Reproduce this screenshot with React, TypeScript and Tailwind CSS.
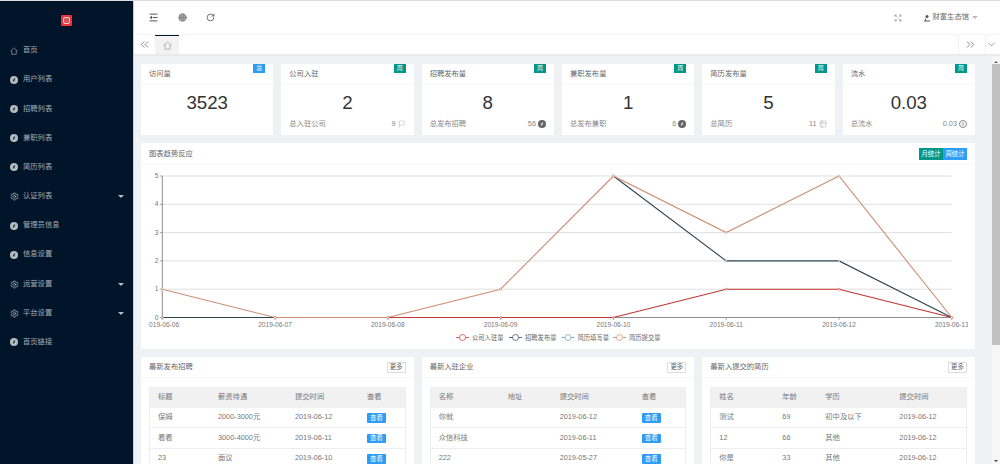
import React from "react";
import { Globe, RotateCw, ChevronsLeft, ChevronsRight, ChevronDown, Settings, Expand, Flag, Table2 } from "lucide-react";

const FONT = "font-['Liberation_Sans','Noto_Sans_CJK_SC',sans-serif]";

function HouseIcon({ className }: { className: string }) {
  return (
    <svg viewBox="0 0 16 16" className={className} fill="none" stroke="currentColor" strokeWidth="1.3">
      <path d="M1 8.5 L8 1.5 L15 8.5" />
      <path d="M3.5 6.5 V14.5 H12.5 V6.5" />
    </svg>
  );
}

function DotIcon() {
  return (
    <svg viewBox="0 0 16 16" className="w-[8px] h-[8px] shrink-0">
      <circle cx="8" cy="8" r="8" fill="#b4b9be" />
      <path d="M10.5 4 L7 7 L5.5 12 L9 9 Z" fill="#001529" />
    </svg>
  );
}

type MenuItem = { label: string; icon: "home" | "dot" | "gear"; arrow?: boolean };
const menu: MenuItem[] = [
  { label: "首页", icon: "home" },
  { label: "用户列表", icon: "dot" },
  { label: "招聘列表", icon: "dot" },
  { label: "兼职列表", icon: "dot" },
  { label: "简历列表", icon: "dot" },
  { label: "认证列表", icon: "gear", arrow: true },
  { label: "管理员信息", icon: "dot" },
  { label: "信息设置", icon: "dot" },
  { label: "运营设置", icon: "gear", arrow: true },
  { label: "平台设置", icon: "gear", arrow: true },
  { label: "首页链接", icon: "dot" },
];

function Sidebar() {
  return (
    <aside className="w-[133px] shrink-0 bg-[#001529] text-[#a6adb4] flex flex-col">
      <div className="h-[35px] flex items-center justify-center pt-[4px]">
        <div className="w-[11px] h-[11px] bg-[#ee3338] rounded-[1px] flex items-center justify-center">
          <div className="w-[7px] h-[7px] rounded-[2px] border-[1.5px] border-[#f6cfcf] bg-[#d9555c]" />
        </div>
      </div>
      <nav className="flex flex-col">
        {menu.map((m) => (
          <div key={m.label} className="h-[29.2px] flex items-center pl-[10px] pr-[8px] text-[7.3px] relative">
            <span className="w-[8px] flex justify-center mr-[5px]">
              {m.icon === "home" && <HouseIcon className="w-[8px] h-[8px] shrink-0" />}
              {m.icon === "dot" && <DotIcon />}
              {m.icon === "gear" && <Settings size={9} strokeWidth={2.2} className="shrink-0" />}
            </span>
            <span>{m.label}</span>
            {m.arrow && (
              <span className="ml-auto mr-[1px] w-0 h-0 border-l-[3px] border-r-[3px] border-t-[3px] border-l-transparent border-r-transparent border-t-[#b5bbc0]" />
            )}
          </div>
        ))}
      </nav>
    </aside>
  );
}

function TopBar() {
  return (
    <header className="h-[34px] shrink-0 bg-white border-b border-[#f4f5f6] flex items-center pl-[15px] pr-[22px] text-[#444]">
      <svg viewBox="0 0 16 16" className="w-[9px] h-[9px]" fill="none" stroke="#444" strokeWidth="1.6">
        <path d="M1 2 H15 M7 8 H15 M1 14 H15" />
        <path d="M5 5.5 L1.5 8 L5 10.5 Z" fill="#444" strokeWidth="0.6" />
      </svg>
      <Globe size={9} strokeWidth={1.6} fill="#a8a8a8" className="ml-[20px] text-[#777]" />
      <RotateCw size={9} strokeWidth={2.2} className="ml-[19px] text-[#555]" />
      <Expand size={8} strokeWidth={1.8} className="ml-auto text-[#888]" />
      <div className="ml-[21px] flex items-center text-[7.3px] text-[#666]">
        <svg viewBox="0 0 16 16" className="w-[8px] h-[8px] mr-[2px]">
          <circle cx="8" cy="5" r="3" fill="#555" />
          <path d="M2 15 L14 15 L14 13 L5 13 L7 9 L5 9 Z" fill="#555" />
        </svg>
        <span>财富生态馆</span>
        <span className="ml-[3px] w-0 h-0 border-l-[3px] border-r-[3px] border-t-[3px] border-l-transparent border-r-transparent border-t-[#bbb]" />
      </div>
    </header>
  );
}

function TabBar() {
  return (
    <div className="h-[21px] shrink-0 bg-white border-b-2 border-[#e9eaec] flex items-stretch text-[#666]">
      <div className="w-[21px] flex items-center justify-center">
        <ChevronsLeft size={13} strokeWidth={1.4} />
      </div>
      <div className="w-[24px] bg-[#f3f3f3] border-t border-[#001529] flex items-center justify-center text-[#999]">
        <HouseIcon className="w-[9px] h-[9px]" />
      </div>
      <div className="ml-auto w-[27px] border-l border-[#f0f0f0] flex items-center justify-center pr-[3px]">
        <ChevronsRight size={13} strokeWidth={1.4} />
      </div>
      <div className="w-[15px] border-l border-[#f0f0f0] flex items-center justify-start">
        <ChevronDown size={11} strokeWidth={1.4} />
      </div>
    </div>
  );
}

type Stat = { title: string; tag: string; tagColor: string; value: string; foot?: string; footVal?: string; icon?: React.ReactNode };

const coin = (
  <svg viewBox="0 0 16 16" className="w-[8px] h-[8px]">
    <circle cx="8" cy="8" r="8" fill="#666" />
    <path d="M10.5 4 L7 7 L5.5 12 L9 9 Z" fill="#fff" />
  </svg>
);

const stats: Stat[] = [
  { title: "访问量", tag: "总", tagColor: "bg-[#2d9cf7]", value: "3523" },
  { title: "公司入驻", tag: "周", tagColor: "bg-[#009688]", value: "2", foot: "总入驻公司", footVal: "9", icon: <Flag size={8} strokeWidth={1} /> },
  { title: "招聘发布量", tag: "周", tagColor: "bg-[#009688]", value: "8", foot: "总发布招聘", footVal: "56", icon: coin },
  { title: "兼职发布量", tag: "周", tagColor: "bg-[#009688]", value: "1", foot: "总发布兼职", footVal: "6", icon: coin },
  { title: "简历发布量", tag: "周", tagColor: "bg-[#009688]", value: "5", foot: "总简历", footVal: "11", icon: <Table2 size={8} strokeWidth={1} /> },
  {
    title: "流水",
    tag: "周",
    tagColor: "bg-[#009688]",
    value: "0.03",
    foot: "总流水",
    footVal: "0.03",
    icon: <span className="w-[8px] h-[8px] rounded-full border border-[#888] text-[5px] leading-none flex items-center justify-center">¥</span>,
  },
];

function StatCard({ s }: { s: Stat }) {
  return (
    <div className="bg-white h-[71px] relative text-[#666]">
      <div className="h-[21px] pt-[1px] border-b border-[#f6f6f6] px-[8px] flex items-center text-[7.3px]">{s.title}</div>
      <span className={`absolute right-[8px] top-0 h-[9px] w-[12px] ${s.tagColor} text-white text-[6px] flex items-center justify-center`}>{s.tag}</span>
      <div className="text-center text-[#333] text-[18.7px] leading-[22px] pt-[7px] h-[34px]">{s.value}</div>
      {s.foot && (
        <div className="flex items-center justify-between px-[8px] text-[7.3px] text-[#888]">
          <span>{s.foot}</span>
          <span className="flex items-center gap-[2px]">
            {s.footVal}
            {s.icon}
          </span>
        </div>
      )}
    </div>
  );
}

const X = [162.3, 275, 387.8, 500.6, 613.4, 726.2, 839, 951.8].map((v) => v - 141);
const Y = (n: number) => 176 + (5 - n) * 28.3 - 165;
const pts = (d: number[], from = 0) => d.map((v, i) => `${X[i + from]},${Y(v)}`).join(" ");
const dates = ["2019-06-06", "2019-06-07", "2019-06-08", "2019-06-09", "2019-06-10", "2019-06-11", "2019-06-12", "2019-06-13"];
const series = [
  { c: "#c23531", d: [0, 0, 0, 0, 0, 1, 1, 0] },
  { c: "#2f4554", d: [0, 0, 0, 1, 5, 2, 2, 0] },
  { c: "#d48265", d: [1, 0, 0, 1, 5, 3, 5, 0] },
];

function Chart() {
  return (
    <svg viewBox="0 0 834 184" className="w-[834px] h-[184px] block">
      <style>{`text{font-family:'Liberation Sans','Noto Sans CJK SC',sans-serif}`}</style>
      {[1, 2, 3, 4, 5].map((n) => (
        <line key={n} x1={X[0]} x2={X[7]} y1={Y(n)} y2={Y(n)} stroke="#e0e0e0" strokeWidth="1" />
      ))}
      <line x1={X[0]} x2={X[0]} y1={Y(5)} y2={Y(0)} stroke="#8d8d8d" strokeWidth="1" />
      <line x1={X[0]} x2={X[7]} y1={Y(0)} y2={Y(0)} stroke="#8d8d8d" strokeWidth="1" />
      {[0, 1, 2, 3, 4, 5].map((n) => (
        <g key={n}>
          <line x1={X[0] - 2.5} x2={X[0]} y1={Y(n)} y2={Y(n)} stroke="#8d8d8d" strokeWidth="0.8" />
          <text x={X[0] - 4} y={Y(n) + 2} textAnchor="end" fontSize="6.6" fill="#777">{n}</text>
        </g>
      ))}
      {dates.map((d, i) => (
        <g key={d}>
          <line x1={X[i]} x2={X[i]} y1={Y(0)} y2={Y(0) + 2.5} stroke="#8d8d8d" strokeWidth="0.8" />
          <text x={X[i]} y={Y(0) + 9} textAnchor="middle" fontSize="6.6" fill="#777">{d}</text>
        </g>
      ))}
      <rect x="0" y={Y(0) + 3} width="8" height="9" fill="#fff" />
      <rect x="827" y={Y(0) + 3} width="7" height="9" fill="#fff" />
      <polyline points={pts(series[0].d)} fill="none" stroke={series[0].c} strokeWidth="1.1" />
      <polyline points={pts(series[1].d.slice(0, 2))} fill="none" stroke={series[1].c} strokeWidth="1.1" />
      <polyline points={pts(series[1].d.slice(4), 4)} fill="none" stroke={series[1].c} strokeWidth="1.1" />
      <polyline points={pts(series[2].d)} fill="none" stroke="#cf8d75" strokeWidth="1.1" />
      <line x1={X[2]} x2={X[4]} y1={Y(0)} y2={Y(0)} stroke={series[0].c} strokeWidth="1.1" />
      {series.flatMap((s) =>
        s.d.map((v, i) => <circle key={s.c + i} cx={X[i]} cy={Y(v)} r="1" fill="#fff" stroke={s.c === "#2f4554" ? "#8a7a78" : s.c} strokeWidth="0.5" />)
      )}
      {[
        { c: "#c23531", t: "公司入驻量", x: 315 },
        { c: "#2f4554", t: "招聘发布量", x: 368 },
        { c: "#61a0a8", t: "简历填写量", x: 420.5 },
        { c: "#d48265", t: "简历提交量", x: 472 },
      ].map((l) => (
        <g key={l.t}>
          <line x1={l.x} x2={l.x + 13} y1="172.5" y2="172.5" stroke={l.c} strokeWidth="0.8" />
          <circle cx={l.x + 6.5} cy="172.5" r="3" fill="#fff" stroke={l.c} strokeWidth="0.7" />
          <text x={l.x + 16} y="175" fontSize="6.3" fill="#666">{l.t}</text>
        </g>
      ))}
    </svg>
  );
}

type Tbl = { title: string; cols: string; head: string[]; rows: string[][]; viewCol?: boolean };
const tables: Tbl[] = [
  {
    title: "最新发布招聘",
    cols: "grid-cols-[60px_77px_72px_1fr]",
    head: ["标题", "薪资待遇", "提交时间", "查看"],
    rows: [["保姆", "2000-3000元", "2019-06-12"], ["看看", "3000-4000元", "2019-06-11"], ["23", "面议", "2019-06-10"]],
    viewCol: true,
  },
  {
    title: "最新入驻企业",
    cols: "grid-cols-[69px_52px_82px_1fr]",
    head: ["名称", "地址", "提交时间", "查看"],
    rows: [["你就", "", "2019-06-12"], ["众信科技", "", "2019-06-11"], ["222", "", "2019-05-27"]],
    viewCol: true,
  },
  {
    title: "最新入提交的简历",
    cols: "grid-cols-[63px_43px_74px_1fr]",
    head: ["姓名", "年龄", "学历", "提交时间"],
    rows: [["测试", "69", "初中及以下", "2019-06-12"], ["12", "66", "其他", "2019-06-12"], ["你是", "33", "其他", "2019-06-12"]],
  },
];

function TableCard({ t }: { t: Tbl }) {
  return (
    <div className="bg-white text-[#666] h-[120px]">
      <div className="h-[21px] border-b border-[#f6f6f6] px-[8px] flex items-center justify-between text-[7.3px]">
        <span className="pt-[1px]">{t.title}</span>
        <span className="w-[19px] h-[11px] border border-[#ddd] flex items-center justify-center text-[6.4px]">更多</span>
      </div>
      <div className="mt-[9px] mx-[8px] border-x border-[#eeeeee] text-[7.3px]">
        <div className={`grid ${t.cols} pl-[8px] h-[20.5px] items-center bg-[#f1f1f1] text-[#777]`}>
          {t.head.map((h) => (
            <span key={h}>{h}</span>
          ))}
        </div>
        {t.rows.map((r) => (
          <div key={r.join()} className={`grid ${t.cols} pl-[8px] pt-[1px] h-[20.5px] items-center border-b border-[#eeeeee] text-[#777]`}>
            {r.map((c, i) => (
              <span key={i}>{c}</span>
            ))}
            {t.viewCol && (
              <span className="w-[19px] h-[9.5px] bg-[#2d9cf7] text-white text-[6.4px] rounded-[1px] flex items-center justify-center">查看</span>
            )}
          </div>
        ))}
      </div>
    </div>
  );
}

function Scrollbar() {
  return (
    <div className="w-[8px] shrink-0 bg-[#f6f6f6] flex flex-col items-center">
      <span className="mt-[5px] w-0 h-0 border-l-[2px] border-r-[2px] border-b-[2px] border-l-transparent border-r-transparent border-b-[#666]" />
      <div className="mt-[1px] w-full h-[281px] bg-[#c1c1c1]" />
      <span className="mt-auto mb-[2px] w-0 h-0 border-l-[2px] border-r-[2px] border-t-[2px] border-l-transparent border-r-transparent border-t-[#444]" />
    </div>
  );
}

export default function App() {
  return (
    <div className={`${FONT} w-[1000px] h-[464px] overflow-hidden flex flex-col bg-white`}>
      <div className="h-px shrink-0 bg-[#dcdcdc]" />
      <div className="flex flex-1 min-h-0">
        <Sidebar />
        <div className="w-px shrink-0 bg-[#c9ccd0]" />
        <main className="flex-1 min-w-0 flex flex-col">
          <TopBar />
          <TabBar />
          <div className="flex flex-1 min-h-0">
            <div className="flex-1 min-w-0 bg-[#eff1f5] overflow-hidden pl-[7px] pr-[17px] pt-[8px] flex flex-col gap-[8px]">
              <div className="grid grid-cols-6 gap-[8px]">
                {stats.map((s) => (
                  <StatCard key={s.title} s={s} />
                ))}
              </div>
              <div className="bg-white h-[206px] shrink-0">
                <div className="h-[22px] pt-[1px] border-b border-[#f6f6f6] px-[8px] flex items-center justify-between text-[7.3px] text-[#666]">
                  <span>图表趋势反应</span>
                  <span className="flex text-white text-[6.4px]">
                    <span className="w-[24px] h-[12px] bg-[#009688] flex items-center justify-center">月统计</span>
                    <span className="w-[24px] h-[12px] bg-[#2d9cf7] flex items-center justify-center">周统计</span>
                  </span>
                </div>
                <Chart />
              </div>
              <div className="grid grid-cols-3 gap-[8px]">
                {tables.map((t) => (
                  <TableCard key={t.title} t={t} />
                ))}
              </div>
            </div>
            <Scrollbar />
          </div>
        </main>
      </div>
    </div>
  );
}
